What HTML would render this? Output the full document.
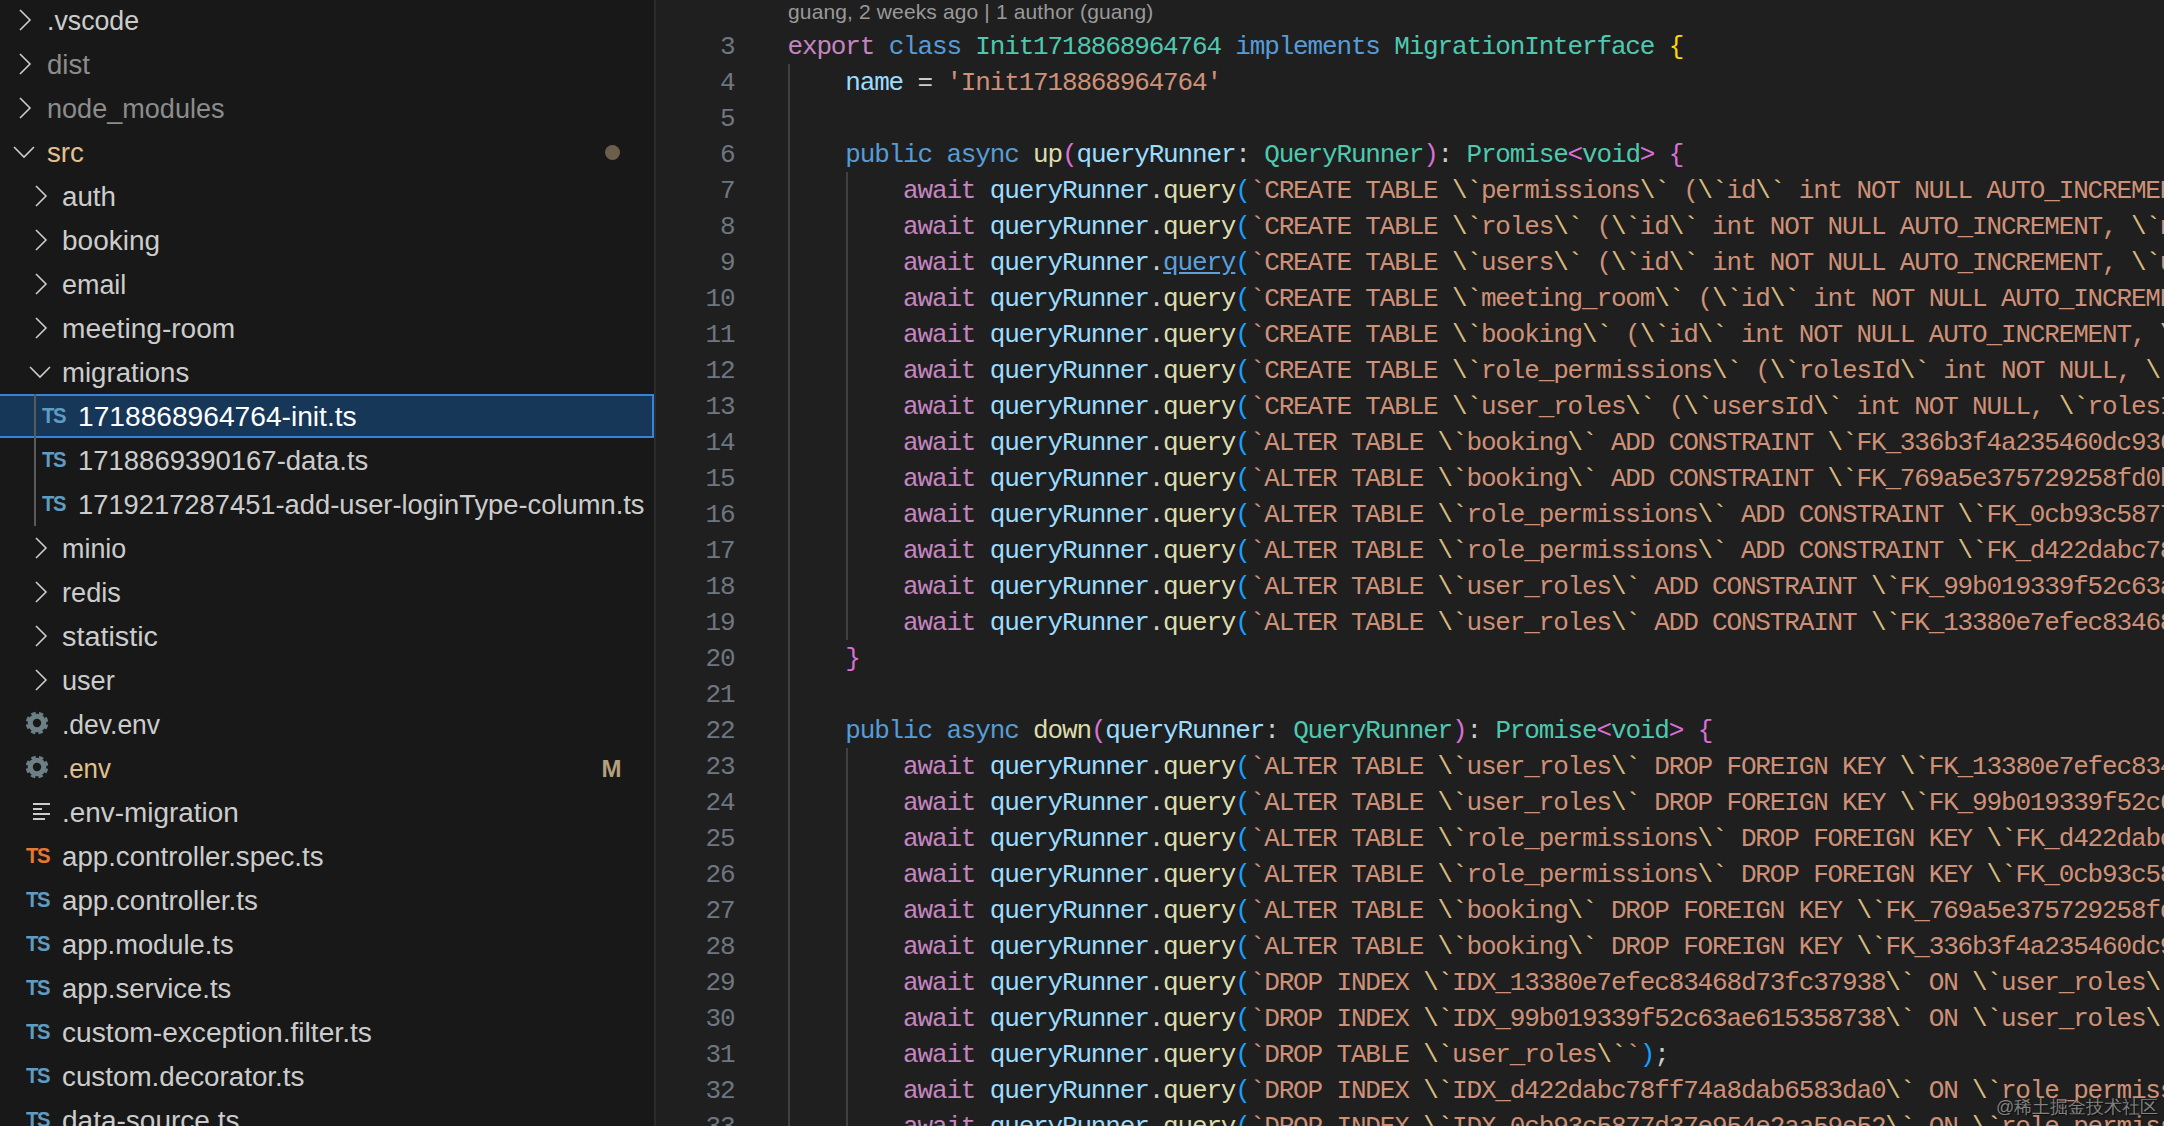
<!DOCTYPE html>
<html><head><meta charset="utf-8"><style>
html,body{margin:0;padding:0;width:2164px;height:1126px;overflow:hidden;background:#1f1f1f;}
body{position:relative;font-family:"Liberation Sans",sans-serif;}
#side{position:absolute;left:0;top:0;width:654px;height:1126px;background:#181818;overflow:hidden;}
#sborder{position:absolute;left:654px;top:0;width:2px;height:1126px;background:#2b2b2b;}
#editor{position:absolute;left:656px;top:0;right:0;bottom:0;background:#1f1f1f;overflow:hidden;}
.it{position:absolute;margin-top:1px;height:44px;line-height:44px;font-size:27px;white-space:pre;transform-origin:0 0;}
.ic{position:absolute;overflow:visible;}
.ts{position:absolute;height:44px;line-height:44px;font-size:22.5px;font-weight:bold;letter-spacing:-1.4px;transform:scaleX(0.9);transform-origin:0 0;}
.sel{position:absolute;left:-2px;width:656px;height:44px;box-sizing:border-box;background:#173759;border:2px solid #3882dc;}
.tg{position:absolute;left:34px;width:2px;background:#5a5a5a;}
.dot{position:absolute;width:15px;height:15px;border-radius:50%;background:#6b5f4b;}
.mdec{position:absolute;left:601.5px;margin-top:1px;height:44px;line-height:44px;font-size:24px;font-weight:bold;color:#b4a07c;}
.num{position:absolute;left:0;width:78.5px;text-align:right;height:36px;line-height:36px;font-family:"Liberation Mono",monospace;font-size:26px;letter-spacing:-1.13px;color:#6e7681;}
.ln{position:absolute;left:131.5px;height:36px;line-height:36px;font-family:"Liberation Mono",monospace;font-size:26px;letter-spacing:-1.158px;white-space:pre;color:#cccccc;}
.lk{color:#5c9fdc;text-decoration:underline;}
.ig{position:absolute;width:2px;background:#404040;}
.cl{position:absolute;left:132px;top:-3px;height:30px;line-height:30px;font-size:21px;letter-spacing:0.135px;color:#999999;white-space:pre;}
.wm{position:absolute;left:1340px;top:1095px;font-size:18px;line-height:24px;color:rgba(150,150,150,0.85);text-shadow:1px 1px 1px rgba(0,0,0,0.6);white-space:pre;}

</style></head><body>
<div id="side">
<div class="sel" style="top:394px"></div>
<div class="tg" style="top:394px;height:132px"></div>
<div class="it" style="top:-2px;left:47.0px;color:#cccccc;transform:scaleX(0.9891)">.vscode</div>
<svg class="ic" style="left:17.8px;top:8.0px" width="14" height="24" viewBox="0 0 14 24"><path d="M2 2 L12 12 L2 22" fill="none" stroke="#cccccc" stroke-width="1.6"/></svg>
<div class="it" style="top:42px;left:47.0px;color:#8c8c8c;transform:scaleX(1.0214)">dist</div>
<svg class="ic" style="left:17.8px;top:52.0px" width="14" height="24" viewBox="0 0 14 24"><path d="M2 2 L12 12 L2 22" fill="none" stroke="#cccccc" stroke-width="1.6"/></svg>
<div class="it" style="top:86px;left:47.0px;color:#8c8c8c;transform:scaleX(1.0023)">node_modules</div>
<svg class="ic" style="left:17.8px;top:96.0px" width="14" height="24" viewBox="0 0 14 24"><path d="M2 2 L12 12 L2 22" fill="none" stroke="#cccccc" stroke-width="1.6"/></svg>
<div class="it" style="top:130px;left:47.0px;color:#e2c08d;transform:scaleX(1.0257)">src</div>
<svg class="ic" style="left:12.0px;top:145.0px" width="24" height="14" viewBox="0 0 24 14"><path d="M2 2 L12 12 L22 2" fill="none" stroke="#cccccc" stroke-width="1.6"/></svg>
<div class="it" style="top:174px;left:62.0px;color:#cccccc;transform:scaleX(1.0275)">auth</div>
<svg class="ic" style="left:33.8px;top:184.0px" width="14" height="24" viewBox="0 0 14 24"><path d="M2 2 L12 12 L2 22" fill="none" stroke="#cccccc" stroke-width="1.6"/></svg>
<div class="it" style="top:218px;left:62.0px;color:#cccccc;transform:scaleX(1.0366)">booking</div>
<svg class="ic" style="left:33.8px;top:228.0px" width="14" height="24" viewBox="0 0 14 24"><path d="M2 2 L12 12 L2 22" fill="none" stroke="#cccccc" stroke-width="1.6"/></svg>
<div class="it" style="top:262px;left:62.0px;color:#cccccc;transform:scaleX(0.9968)">email</div>
<svg class="ic" style="left:33.8px;top:272.0px" width="14" height="24" viewBox="0 0 14 24"><path d="M2 2 L12 12 L2 22" fill="none" stroke="#cccccc" stroke-width="1.6"/></svg>
<div class="it" style="top:306px;left:62.0px;color:#cccccc;transform:scaleX(1.0400)">meeting-room</div>
<svg class="ic" style="left:33.8px;top:316.0px" width="14" height="24" viewBox="0 0 14 24"><path d="M2 2 L12 12 L2 22" fill="none" stroke="#cccccc" stroke-width="1.6"/></svg>
<div class="it" style="top:350px;left:62.0px;color:#cccccc;transform:scaleX(1.0218)">migrations</div>
<svg class="ic" style="left:28.4px;top:365.0px" width="24" height="14" viewBox="0 0 24 14"><path d="M2 2 L12 12 L22 2" fill="none" stroke="#cccccc" stroke-width="1.6"/></svg>
<div class="it" style="top:394px;left:78.0px;color:#ffffff;transform:scaleX(1.0427)">1718868964764-init.ts</div>
<div class="ts" style="top:394px;left:42.0px;color:#5e9cc2">TS</div>
<div class="it" style="top:438px;left:78.0px;color:#cccccc;transform:scaleX(1.0175)">1718869390167-data.ts</div>
<div class="ts" style="top:438px;left:42.0px;color:#5e9cc2">TS</div>
<div class="it" style="top:482px;left:78.0px;color:#cccccc;transform:scaleX(1.0118)">1719217287451-add-user-loginType-column.ts</div>
<div class="ts" style="top:482px;left:42.0px;color:#5e9cc2">TS</div>
<div class="it" style="top:526px;left:62.0px;color:#cccccc;transform:scaleX(0.9969)">minio</div>
<svg class="ic" style="left:33.8px;top:536.0px" width="14" height="24" viewBox="0 0 14 24"><path d="M2 2 L12 12 L2 22" fill="none" stroke="#cccccc" stroke-width="1.6"/></svg>
<div class="it" style="top:570px;left:62.0px;color:#cccccc;transform:scaleX(1.0052)">redis</div>
<svg class="ic" style="left:33.8px;top:580.0px" width="14" height="24" viewBox="0 0 14 24"><path d="M2 2 L12 12 L2 22" fill="none" stroke="#cccccc" stroke-width="1.6"/></svg>
<div class="it" style="top:614px;left:62.0px;color:#cccccc;transform:scaleX(1.0663)">statistic</div>
<svg class="ic" style="left:33.8px;top:624.0px" width="14" height="24" viewBox="0 0 14 24"><path d="M2 2 L12 12 L2 22" fill="none" stroke="#cccccc" stroke-width="1.6"/></svg>
<div class="it" style="top:658px;left:62.0px;color:#cccccc;transform:scaleX(1.0038)">user</div>
<svg class="ic" style="left:33.8px;top:668.0px" width="14" height="24" viewBox="0 0 14 24"><path d="M2 2 L12 12 L2 22" fill="none" stroke="#cccccc" stroke-width="1.6"/></svg>
<div class="it" style="top:702px;left:62.0px;color:#cccccc;transform:scaleX(0.9800)">.dev.env</div>
<svg class="ic" style="left:25.1px;top:711.1px" width="24" height="24" viewBox="-12 -12 24 24"><circle r='9.3' fill='#6d8086'/><circle r='10' fill='none' stroke='#6d8086' stroke-width='2.6' stroke-dasharray='4.5 3.354' stroke-dashoffset='-1.677'/><circle r='4.2' fill='#181818'/></svg>
<div class="it" style="top:746px;left:62.0px;color:#e2c08d;transform:scaleX(0.9569)">.env</div>
<svg class="ic" style="left:25.1px;top:755.1px" width="24" height="24" viewBox="-12 -12 24 24"><circle r='9.3' fill='#6d8086'/><circle r='10' fill='none' stroke='#6d8086' stroke-width='2.6' stroke-dasharray='4.5 3.354' stroke-dashoffset='-1.677'/><circle r='4.2' fill='#181818'/></svg>
<div class="it" style="top:790px;left:62.0px;color:#cccccc;transform:scaleX(1.0329)">.env-migration</div>
<svg class="ic" style="left:33.0px;top:803.0px" width="18" height="18" viewBox="0 0 18 18"><g stroke="#cccccc" stroke-width="2"><path d="M0 1 H17"/><path d="M0 6 H9"/><path d="M0 11 H17"/><path d="M0 16 H12"/></g></svg>
<div class="it" style="top:834px;left:62.0px;color:#cccccc;transform:scaleX(1.0251)">app.controller.spec.ts</div>
<div class="ts" style="top:834px;left:26.0px;color:#e37933">TS</div>
<div class="it" style="top:878px;left:62.0px;color:#cccccc;transform:scaleX(1.0274)">app.controller.ts</div>
<div class="ts" style="top:878px;left:26.0px;color:#5e9cc2">TS</div>
<div class="it" style="top:922px;left:62.0px;color:#cccccc;transform:scaleX(1.0118)">app.module.ts</div>
<div class="ts" style="top:922px;left:26.0px;color:#5e9cc2">TS</div>
<div class="it" style="top:966px;left:62.0px;color:#cccccc;transform:scaleX(1.0163)">app.service.ts</div>
<div class="ts" style="top:966px;left:26.0px;color:#5e9cc2">TS</div>
<div class="it" style="top:1010px;left:62.0px;color:#cccccc;transform:scaleX(1.0429)">custom-exception.filter.ts</div>
<div class="ts" style="top:1010px;left:26.0px;color:#5e9cc2">TS</div>
<div class="it" style="top:1054px;left:62.0px;color:#cccccc;transform:scaleX(1.0289)">custom.decorator.ts</div>
<div class="ts" style="top:1054px;left:26.0px;color:#5e9cc2">TS</div>
<div class="it" style="top:1098px;left:62.0px;color:#cccccc;transform:scaleX(1.0371)">data-source.ts</div>
<div class="ts" style="top:1098px;left:26.0px;color:#5e9cc2">TS</div>
<div class="dot" style="left:604.5px;top:144.5px"></div>
<div class="mdec" style="top:746px">M</div>
</div>
<div id="sborder"></div>
<div id="editor">
<div class="cl">guang, 2 weeks ago | 1 author (guang)</div>
<div class="ig" style="left:132px;top:64.00px;height:1080.00px"></div>
<div class="ig" style="left:190px;top:172.00px;height:468.00px"></div>
<div class="ig" style="left:190px;top:748.00px;height:396.00px"></div>
<div class="num" style="top:29.00px">3</div>
<div class="ln" style="top:29.00px"><span style="color:#c586c0">export</span> <span style="color:#569cd6">class</span> <span style="color:#4ec9b0">Init1718868964764</span> <span style="color:#569cd6">implements</span> <span style="color:#4ec9b0">MigrationInterface</span> <span style="color:#ffd700">{</span></div>
<div class="num" style="top:65.00px">4</div>
<div class="ln" style="top:65.00px">    <span style="color:#9cdcfe">name</span> <span style="color:#cccccc">=</span> <span style="color:#ce9178">'Init1718868964764'</span></div>
<div class="num" style="top:101.00px">5</div>
<div class="ln" style="top:101.00px"></div>
<div class="num" style="top:137.00px">6</div>
<div class="ln" style="top:137.00px">    <span style="color:#569cd6">public</span> <span style="color:#569cd6">async</span> <span style="color:#dcdcaa">up</span><span style="color:#da70d6">(</span><span style="color:#9cdcfe">queryRunner</span><span style="color:#cccccc">:</span> <span style="color:#4ec9b0">QueryRunner</span><span style="color:#da70d6">)</span><span style="color:#cccccc">:</span> <span style="color:#4ec9b0">Promise</span><span style="color:#da70d6">&lt;</span><span style="color:#4ec9b0">void</span><span style="color:#da70d6">&gt;</span> <span style="color:#da70d6">{</span></div>
<div class="num" style="top:173.00px">7</div>
<div class="ln" style="top:173.00px">        <span style="color:#c586c0">await</span> <span style="color:#9cdcfe">queryRunner</span><span style="color:#cccccc">.</span><span style="color:#dcdcaa">query</span><span style="color:#179fff">(</span><span style="color:#ce9178">`</span><span style="color:#ce9178">CREATE TABLE </span><span style="color:#d7ba7d">\`</span><span style="color:#ce9178">permissions</span><span style="color:#d7ba7d">\`</span><span style="color:#ce9178"> (</span><span style="color:#d7ba7d">\`</span><span style="color:#ce9178">id</span><span style="color:#d7ba7d">\`</span><span style="color:#ce9178"> int NOT NULL AUTO_INCREMENT, </span><span style="color:#d7ba7d">\`</span><span style="color:#ce9178">name</span><span style="color:#d7ba7d">\`</span><span style="color:#ce9178"> varchar(20) NOT NULL</span><span style="color:#ce9178">`</span><span style="color:#179fff">)</span><span style="color:#cccccc">;</span></div>
<div class="num" style="top:209.00px">8</div>
<div class="ln" style="top:209.00px">        <span style="color:#c586c0">await</span> <span style="color:#9cdcfe">queryRunner</span><span style="color:#cccccc">.</span><span style="color:#dcdcaa">query</span><span style="color:#179fff">(</span><span style="color:#ce9178">`</span><span style="color:#ce9178">CREATE TABLE </span><span style="color:#d7ba7d">\`</span><span style="color:#ce9178">roles</span><span style="color:#d7ba7d">\`</span><span style="color:#ce9178"> (</span><span style="color:#d7ba7d">\`</span><span style="color:#ce9178">id</span><span style="color:#d7ba7d">\`</span><span style="color:#ce9178"> int NOT NULL AUTO_INCREMENT, </span><span style="color:#d7ba7d">\`</span><span style="color:#ce9178">name</span><span style="color:#d7ba7d">\`</span><span style="color:#ce9178"> varchar(20) NOT NULL</span><span style="color:#ce9178">`</span><span style="color:#179fff">)</span><span style="color:#cccccc">;</span></div>
<div class="num" style="top:245.00px">9</div>
<div class="ln" style="top:245.00px">        <span style="color:#c586c0">await</span> <span style="color:#9cdcfe">queryRunner</span><span style="color:#cccccc">.</span><span class="lk">query</span><span style="color:#179fff">(</span><span style="color:#ce9178">`</span><span style="color:#ce9178">CREATE TABLE </span><span style="color:#d7ba7d">\`</span><span style="color:#ce9178">users</span><span style="color:#d7ba7d">\`</span><span style="color:#ce9178"> (</span><span style="color:#d7ba7d">\`</span><span style="color:#ce9178">id</span><span style="color:#d7ba7d">\`</span><span style="color:#ce9178"> int NOT NULL AUTO_INCREMENT, </span><span style="color:#d7ba7d">\`</span><span style="color:#ce9178">username</span><span style="color:#d7ba7d">\`</span><span style="color:#ce9178"> varchar(50) NOT NULL</span><span style="color:#ce9178">`</span><span style="color:#179fff">)</span><span style="color:#cccccc">;</span></div>
<div class="num" style="top:281.00px">10</div>
<div class="ln" style="top:281.00px">        <span style="color:#c586c0">await</span> <span style="color:#9cdcfe">queryRunner</span><span style="color:#cccccc">.</span><span style="color:#dcdcaa">query</span><span style="color:#179fff">(</span><span style="color:#ce9178">`</span><span style="color:#ce9178">CREATE TABLE </span><span style="color:#d7ba7d">\`</span><span style="color:#ce9178">meeting_room</span><span style="color:#d7ba7d">\`</span><span style="color:#ce9178"> (</span><span style="color:#d7ba7d">\`</span><span style="color:#ce9178">id</span><span style="color:#d7ba7d">\`</span><span style="color:#ce9178"> int NOT NULL AUTO_INCREMENT, </span><span style="color:#d7ba7d">\`</span><span style="color:#ce9178">name</span><span style="color:#d7ba7d">\`</span><span style="color:#ce9178"> varchar(50) NOT NULL</span><span style="color:#ce9178">`</span><span style="color:#179fff">)</span><span style="color:#cccccc">;</span></div>
<div class="num" style="top:317.00px">11</div>
<div class="ln" style="top:317.00px">        <span style="color:#c586c0">await</span> <span style="color:#9cdcfe">queryRunner</span><span style="color:#cccccc">.</span><span style="color:#dcdcaa">query</span><span style="color:#179fff">(</span><span style="color:#ce9178">`</span><span style="color:#ce9178">CREATE TABLE </span><span style="color:#d7ba7d">\`</span><span style="color:#ce9178">booking</span><span style="color:#d7ba7d">\`</span><span style="color:#ce9178"> (</span><span style="color:#d7ba7d">\`</span><span style="color:#ce9178">id</span><span style="color:#d7ba7d">\`</span><span style="color:#ce9178"> int NOT NULL AUTO_INCREMENT, </span><span style="color:#d7ba7d">\`</span><span style="color:#ce9178">startTime</span><span style="color:#d7ba7d">\`</span><span style="color:#ce9178"> datetime NOT NULL</span><span style="color:#ce9178">`</span><span style="color:#179fff">)</span><span style="color:#cccccc">;</span></div>
<div class="num" style="top:353.00px">12</div>
<div class="ln" style="top:353.00px">        <span style="color:#c586c0">await</span> <span style="color:#9cdcfe">queryRunner</span><span style="color:#cccccc">.</span><span style="color:#dcdcaa">query</span><span style="color:#179fff">(</span><span style="color:#ce9178">`</span><span style="color:#ce9178">CREATE TABLE </span><span style="color:#d7ba7d">\`</span><span style="color:#ce9178">role_permissions</span><span style="color:#d7ba7d">\`</span><span style="color:#ce9178"> (</span><span style="color:#d7ba7d">\`</span><span style="color:#ce9178">rolesId</span><span style="color:#d7ba7d">\`</span><span style="color:#ce9178"> int NOT NULL, </span><span style="color:#d7ba7d">\`</span><span style="color:#ce9178">permissionsId</span><span style="color:#d7ba7d">\`</span><span style="color:#ce9178"> int NOT NULL</span><span style="color:#ce9178">`</span><span style="color:#179fff">)</span><span style="color:#cccccc">;</span></div>
<div class="num" style="top:389.00px">13</div>
<div class="ln" style="top:389.00px">        <span style="color:#c586c0">await</span> <span style="color:#9cdcfe">queryRunner</span><span style="color:#cccccc">.</span><span style="color:#dcdcaa">query</span><span style="color:#179fff">(</span><span style="color:#ce9178">`</span><span style="color:#ce9178">CREATE TABLE </span><span style="color:#d7ba7d">\`</span><span style="color:#ce9178">user_roles</span><span style="color:#d7ba7d">\`</span><span style="color:#ce9178"> (</span><span style="color:#d7ba7d">\`</span><span style="color:#ce9178">usersId</span><span style="color:#d7ba7d">\`</span><span style="color:#ce9178"> int NOT NULL, </span><span style="color:#d7ba7d">\`</span><span style="color:#ce9178">rolesId</span><span style="color:#d7ba7d">\`</span><span style="color:#ce9178"> int NOT NULL</span><span style="color:#ce9178">`</span><span style="color:#179fff">)</span><span style="color:#cccccc">;</span></div>
<div class="num" style="top:425.00px">14</div>
<div class="ln" style="top:425.00px">        <span style="color:#c586c0">await</span> <span style="color:#9cdcfe">queryRunner</span><span style="color:#cccccc">.</span><span style="color:#dcdcaa">query</span><span style="color:#179fff">(</span><span style="color:#ce9178">`</span><span style="color:#ce9178">ALTER TABLE </span><span style="color:#d7ba7d">\`</span><span style="color:#ce9178">booking</span><span style="color:#d7ba7d">\`</span><span style="color:#ce9178"> ADD CONSTRAINT </span><span style="color:#d7ba7d">\`</span><span style="color:#ce9178">FK_336b3f4a235460dc93645fbf222</span><span style="color:#d7ba7d">\`</span><span style="color:#ce9178"> FOREIGN KEY</span><span style="color:#ce9178">`</span><span style="color:#179fff">)</span><span style="color:#cccccc">;</span></div>
<div class="num" style="top:461.00px">15</div>
<div class="ln" style="top:461.00px">        <span style="color:#c586c0">await</span> <span style="color:#9cdcfe">queryRunner</span><span style="color:#cccccc">.</span><span style="color:#dcdcaa">query</span><span style="color:#179fff">(</span><span style="color:#ce9178">`</span><span style="color:#ce9178">ALTER TABLE </span><span style="color:#d7ba7d">\`</span><span style="color:#ce9178">booking</span><span style="color:#d7ba7d">\`</span><span style="color:#ce9178"> ADD CONSTRAINT </span><span style="color:#d7ba7d">\`</span><span style="color:#ce9178">FK_769a5e375729258fd0bbfc0a456</span><span style="color:#d7ba7d">\`</span><span style="color:#ce9178"> FOREIGN KEY</span><span style="color:#ce9178">`</span><span style="color:#179fff">)</span><span style="color:#cccccc">;</span></div>
<div class="num" style="top:497.00px">16</div>
<div class="ln" style="top:497.00px">        <span style="color:#c586c0">await</span> <span style="color:#9cdcfe">queryRunner</span><span style="color:#cccccc">.</span><span style="color:#dcdcaa">query</span><span style="color:#179fff">(</span><span style="color:#ce9178">`</span><span style="color:#ce9178">ALTER TABLE </span><span style="color:#d7ba7d">\`</span><span style="color:#ce9178">role_permissions</span><span style="color:#d7ba7d">\`</span><span style="color:#ce9178"> ADD CONSTRAINT </span><span style="color:#d7ba7d">\`</span><span style="color:#ce9178">FK_0cb93c5877d37e954e2aa59e52c</span><span style="color:#d7ba7d">\`</span><span style="color:#ce9178"> FOREIGN KEY</span><span style="color:#ce9178">`</span><span style="color:#179fff">)</span><span style="color:#cccccc">;</span></div>
<div class="num" style="top:533.00px">17</div>
<div class="ln" style="top:533.00px">        <span style="color:#c586c0">await</span> <span style="color:#9cdcfe">queryRunner</span><span style="color:#cccccc">.</span><span style="color:#dcdcaa">query</span><span style="color:#179fff">(</span><span style="color:#ce9178">`</span><span style="color:#ce9178">ALTER TABLE </span><span style="color:#d7ba7d">\`</span><span style="color:#ce9178">role_permissions</span><span style="color:#d7ba7d">\`</span><span style="color:#ce9178"> ADD CONSTRAINT </span><span style="color:#d7ba7d">\`</span><span style="color:#ce9178">FK_d422dabc78ff74a8dab6583da02</span><span style="color:#d7ba7d">\`</span><span style="color:#ce9178"> FOREIGN KEY</span><span style="color:#ce9178">`</span><span style="color:#179fff">)</span><span style="color:#cccccc">;</span></div>
<div class="num" style="top:569.00px">18</div>
<div class="ln" style="top:569.00px">        <span style="color:#c586c0">await</span> <span style="color:#9cdcfe">queryRunner</span><span style="color:#cccccc">.</span><span style="color:#dcdcaa">query</span><span style="color:#179fff">(</span><span style="color:#ce9178">`</span><span style="color:#ce9178">ALTER TABLE </span><span style="color:#d7ba7d">\`</span><span style="color:#ce9178">user_roles</span><span style="color:#d7ba7d">\`</span><span style="color:#ce9178"> ADD CONSTRAINT </span><span style="color:#d7ba7d">\`</span><span style="color:#ce9178">FK_99b019339f52c63ae615358738a</span><span style="color:#d7ba7d">\`</span><span style="color:#ce9178"> FOREIGN KEY</span><span style="color:#ce9178">`</span><span style="color:#179fff">)</span><span style="color:#cccccc">;</span></div>
<div class="num" style="top:605.00px">19</div>
<div class="ln" style="top:605.00px">        <span style="color:#c586c0">await</span> <span style="color:#9cdcfe">queryRunner</span><span style="color:#cccccc">.</span><span style="color:#dcdcaa">query</span><span style="color:#179fff">(</span><span style="color:#ce9178">`</span><span style="color:#ce9178">ALTER TABLE </span><span style="color:#d7ba7d">\`</span><span style="color:#ce9178">user_roles</span><span style="color:#d7ba7d">\`</span><span style="color:#ce9178"> ADD CONSTRAINT </span><span style="color:#d7ba7d">\`</span><span style="color:#ce9178">FK_13380e7efec83468d73fc37938e</span><span style="color:#d7ba7d">\`</span><span style="color:#ce9178"> FOREIGN KEY</span><span style="color:#ce9178">`</span><span style="color:#179fff">)</span><span style="color:#cccccc">;</span></div>
<div class="num" style="top:641.00px">20</div>
<div class="ln" style="top:641.00px">    <span style="color:#da70d6">}</span></div>
<div class="num" style="top:677.00px">21</div>
<div class="ln" style="top:677.00px"></div>
<div class="num" style="top:713.00px">22</div>
<div class="ln" style="top:713.00px">    <span style="color:#569cd6">public</span> <span style="color:#569cd6">async</span> <span style="color:#dcdcaa">down</span><span style="color:#da70d6">(</span><span style="color:#9cdcfe">queryRunner</span><span style="color:#cccccc">:</span> <span style="color:#4ec9b0">QueryRunner</span><span style="color:#da70d6">)</span><span style="color:#cccccc">:</span> <span style="color:#4ec9b0">Promise</span><span style="color:#da70d6">&lt;</span><span style="color:#4ec9b0">void</span><span style="color:#da70d6">&gt;</span> <span style="color:#da70d6">{</span></div>
<div class="num" style="top:749.00px">23</div>
<div class="ln" style="top:749.00px">        <span style="color:#c586c0">await</span> <span style="color:#9cdcfe">queryRunner</span><span style="color:#cccccc">.</span><span style="color:#dcdcaa">query</span><span style="color:#179fff">(</span><span style="color:#ce9178">`</span><span style="color:#ce9178">ALTER TABLE </span><span style="color:#d7ba7d">\`</span><span style="color:#ce9178">user_roles</span><span style="color:#d7ba7d">\`</span><span style="color:#ce9178"> DROP FOREIGN KEY </span><span style="color:#d7ba7d">\`</span><span style="color:#ce9178">FK_13380e7efec83468d73fc37938e</span><span style="color:#d7ba7d">\`</span><span style="color:#ce9178">`</span><span style="color:#179fff">)</span><span style="color:#cccccc">;</span></div>
<div class="num" style="top:785.00px">24</div>
<div class="ln" style="top:785.00px">        <span style="color:#c586c0">await</span> <span style="color:#9cdcfe">queryRunner</span><span style="color:#cccccc">.</span><span style="color:#dcdcaa">query</span><span style="color:#179fff">(</span><span style="color:#ce9178">`</span><span style="color:#ce9178">ALTER TABLE </span><span style="color:#d7ba7d">\`</span><span style="color:#ce9178">user_roles</span><span style="color:#d7ba7d">\`</span><span style="color:#ce9178"> DROP FOREIGN KEY </span><span style="color:#d7ba7d">\`</span><span style="color:#ce9178">FK_99b019339f52c63ae615358738a</span><span style="color:#d7ba7d">\`</span><span style="color:#ce9178">`</span><span style="color:#179fff">)</span><span style="color:#cccccc">;</span></div>
<div class="num" style="top:821.00px">25</div>
<div class="ln" style="top:821.00px">        <span style="color:#c586c0">await</span> <span style="color:#9cdcfe">queryRunner</span><span style="color:#cccccc">.</span><span style="color:#dcdcaa">query</span><span style="color:#179fff">(</span><span style="color:#ce9178">`</span><span style="color:#ce9178">ALTER TABLE </span><span style="color:#d7ba7d">\`</span><span style="color:#ce9178">role_permissions</span><span style="color:#d7ba7d">\`</span><span style="color:#ce9178"> DROP FOREIGN KEY </span><span style="color:#d7ba7d">\`</span><span style="color:#ce9178">FK_d422dabc78ff74a8dab6583da02</span><span style="color:#d7ba7d">\`</span><span style="color:#ce9178">`</span><span style="color:#179fff">)</span><span style="color:#cccccc">;</span></div>
<div class="num" style="top:857.00px">26</div>
<div class="ln" style="top:857.00px">        <span style="color:#c586c0">await</span> <span style="color:#9cdcfe">queryRunner</span><span style="color:#cccccc">.</span><span style="color:#dcdcaa">query</span><span style="color:#179fff">(</span><span style="color:#ce9178">`</span><span style="color:#ce9178">ALTER TABLE </span><span style="color:#d7ba7d">\`</span><span style="color:#ce9178">role_permissions</span><span style="color:#d7ba7d">\`</span><span style="color:#ce9178"> DROP FOREIGN KEY </span><span style="color:#d7ba7d">\`</span><span style="color:#ce9178">FK_0cb93c5877d37e954e2aa59e52c</span><span style="color:#d7ba7d">\`</span><span style="color:#ce9178">`</span><span style="color:#179fff">)</span><span style="color:#cccccc">;</span></div>
<div class="num" style="top:893.00px">27</div>
<div class="ln" style="top:893.00px">        <span style="color:#c586c0">await</span> <span style="color:#9cdcfe">queryRunner</span><span style="color:#cccccc">.</span><span style="color:#dcdcaa">query</span><span style="color:#179fff">(</span><span style="color:#ce9178">`</span><span style="color:#ce9178">ALTER TABLE </span><span style="color:#d7ba7d">\`</span><span style="color:#ce9178">booking</span><span style="color:#d7ba7d">\`</span><span style="color:#ce9178"> DROP FOREIGN KEY </span><span style="color:#d7ba7d">\`</span><span style="color:#ce9178">FK_769a5e375729258fd0bbfc0a456</span><span style="color:#d7ba7d">\`</span><span style="color:#ce9178">`</span><span style="color:#179fff">)</span><span style="color:#cccccc">;</span></div>
<div class="num" style="top:929.00px">28</div>
<div class="ln" style="top:929.00px">        <span style="color:#c586c0">await</span> <span style="color:#9cdcfe">queryRunner</span><span style="color:#cccccc">.</span><span style="color:#dcdcaa">query</span><span style="color:#179fff">(</span><span style="color:#ce9178">`</span><span style="color:#ce9178">ALTER TABLE </span><span style="color:#d7ba7d">\`</span><span style="color:#ce9178">booking</span><span style="color:#d7ba7d">\`</span><span style="color:#ce9178"> DROP FOREIGN KEY </span><span style="color:#d7ba7d">\`</span><span style="color:#ce9178">FK_336b3f4a235460dc93645fbf222</span><span style="color:#d7ba7d">\`</span><span style="color:#ce9178">`</span><span style="color:#179fff">)</span><span style="color:#cccccc">;</span></div>
<div class="num" style="top:965.00px">29</div>
<div class="ln" style="top:965.00px">        <span style="color:#c586c0">await</span> <span style="color:#9cdcfe">queryRunner</span><span style="color:#cccccc">.</span><span style="color:#dcdcaa">query</span><span style="color:#179fff">(</span><span style="color:#ce9178">`</span><span style="color:#ce9178">DROP INDEX </span><span style="color:#d7ba7d">\`</span><span style="color:#ce9178">IDX_13380e7efec83468d73fc37938</span><span style="color:#d7ba7d">\`</span><span style="color:#ce9178"> ON </span><span style="color:#d7ba7d">\`</span><span style="color:#ce9178">user_roles</span><span style="color:#d7ba7d">\`</span><span style="color:#ce9178">`</span><span style="color:#179fff">)</span><span style="color:#cccccc">;</span></div>
<div class="num" style="top:1001.00px">30</div>
<div class="ln" style="top:1001.00px">        <span style="color:#c586c0">await</span> <span style="color:#9cdcfe">queryRunner</span><span style="color:#cccccc">.</span><span style="color:#dcdcaa">query</span><span style="color:#179fff">(</span><span style="color:#ce9178">`</span><span style="color:#ce9178">DROP INDEX </span><span style="color:#d7ba7d">\`</span><span style="color:#ce9178">IDX_99b019339f52c63ae615358738</span><span style="color:#d7ba7d">\`</span><span style="color:#ce9178"> ON </span><span style="color:#d7ba7d">\`</span><span style="color:#ce9178">user_roles</span><span style="color:#d7ba7d">\`</span><span style="color:#ce9178">`</span><span style="color:#179fff">)</span><span style="color:#cccccc">;</span></div>
<div class="num" style="top:1037.00px">31</div>
<div class="ln" style="top:1037.00px">        <span style="color:#c586c0">await</span> <span style="color:#9cdcfe">queryRunner</span><span style="color:#cccccc">.</span><span style="color:#dcdcaa">query</span><span style="color:#179fff">(</span><span style="color:#ce9178">`</span><span style="color:#ce9178">DROP TABLE </span><span style="color:#d7ba7d">\`</span><span style="color:#ce9178">user_roles</span><span style="color:#d7ba7d">\`</span><span style="color:#ce9178">`</span><span style="color:#179fff">)</span><span style="color:#cccccc">;</span></div>
<div class="num" style="top:1073.00px">32</div>
<div class="ln" style="top:1073.00px">        <span style="color:#c586c0">await</span> <span style="color:#9cdcfe">queryRunner</span><span style="color:#cccccc">.</span><span style="color:#dcdcaa">query</span><span style="color:#179fff">(</span><span style="color:#ce9178">`</span><span style="color:#ce9178">DROP INDEX </span><span style="color:#d7ba7d">\`</span><span style="color:#ce9178">IDX_d422dabc78ff74a8dab6583da0</span><span style="color:#d7ba7d">\`</span><span style="color:#ce9178"> ON </span><span style="color:#d7ba7d">\`</span><span style="color:#ce9178">role_permissions</span><span style="color:#d7ba7d">\`</span><span style="color:#ce9178">`</span><span style="color:#179fff">)</span><span style="color:#cccccc">;</span></div>
<div class="num" style="top:1109.00px">33</div>
<div class="ln" style="top:1109.00px">        <span style="color:#c586c0">await</span> <span style="color:#9cdcfe">queryRunner</span><span style="color:#cccccc">.</span><span style="color:#dcdcaa">query</span><span style="color:#179fff">(</span><span style="color:#ce9178">`</span><span style="color:#ce9178">DROP INDEX </span><span style="color:#d7ba7d">\`</span><span style="color:#ce9178">IDX_0cb93c5877d37e954e2aa59e52</span><span style="color:#d7ba7d">\`</span><span style="color:#ce9178"> ON </span><span style="color:#d7ba7d">\`</span><span style="color:#ce9178">role_permissions</span><span style="color:#d7ba7d">\`</span><span style="color:#ce9178">`</span><span style="color:#179fff">)</span><span style="color:#cccccc">;</span></div>
<div class="wm">@稀土掘金技术社区</div>
</div>
</body></html>
